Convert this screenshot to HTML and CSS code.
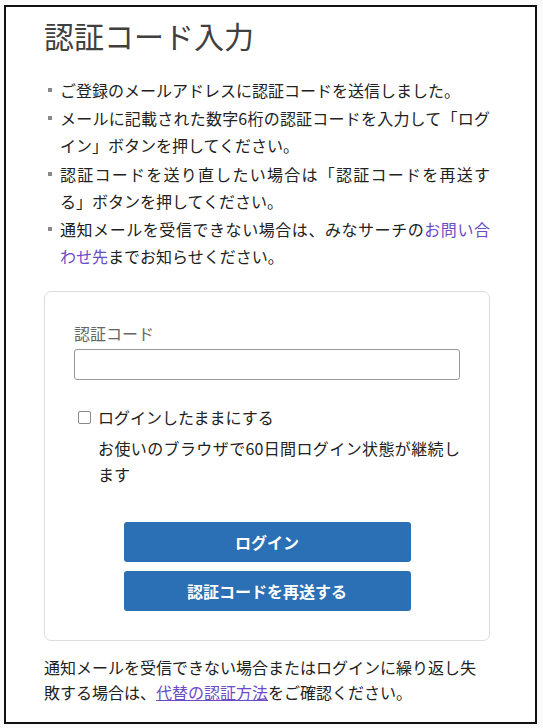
FILE: index.html
```html
<!DOCTYPE html>
<html lang="ja">
<head>
<meta charset="utf-8">
<title>認証コード入力</title>
<link rel="stylesheet" href="styles.css">
</head>
<body>
<div class="frame">
  <h1 class="title">認証コード入力</h1>
  <ul class="notes">
    <li>ご登録のメールアドレスに認証コードを送信しました。</li>
    <li>メールに記載された数字6桁の認証コードを入力して「ログイン」ボタンを押してください。</li>
    <li>認証コードを送り直したい場合は「認証コードを再送する」ボタンを押してください。</li>
    <li>通知メールを受信できない場合は、みなサーチの<a class="link" href="#">お問い合わせ先</a>までお知らせください。</li>
  </ul>
  <form class="card">
    <label class="field-label" for="code">認証コード</label>
    <input class="field-input" id="code" type="text">
    <label class="keep">
      <input class="keep-box" type="checkbox">
      <span>ログインしたままにする</span>
    </label>
    <p class="keep-desc">お使いのブラウザで60日間ログイン状態が継続します</p>
    <div class="actions">
      <button class="btn" type="button">ログイン</button>
      <button class="btn" type="button">認証コードを再送する</button>
    </div>
  </form>
  <p class="footer-note">通知メールを受信できない場合またはログインに繰り返し失敗する場合は、<a class="link underline" href="#">代替の認証方法</a>をご確認ください。</p>
</div>
</body>
</html>
```
FILE: styles.css
```css
* { box-sizing: border-box; }
html, body {
  margin: 0;
  padding: 0;
  background: #fafafa;
}
body {
  font-family: "Noto Sans CJK JP", "Noto Sans", sans-serif;
  color: #222;
  font-size: 16px;
  text-spacing-trim: space-all;
}
.frame {
  margin: 5px 0 0 4px;
  width: 533px;
  height: 719px;
  border: 2px solid #111;
  background: #fff;
  padding: 10px 45px 0 38px;
}
.title {
  margin: 0;
  font-size: 30px;
  line-height: 36px;
  font-weight: 400;
  color: #404040;
}
.notes {
  list-style: none;
  margin: 23.5px 0 20.5px;
  padding: 0 0 0 16px;
}
.notes li {
  position: relative;
  line-height: 27px;
  text-align: justify;
  margin-bottom: 1.5px;
}
.notes li::before {
  content: "";
  position: absolute;
  left: -12px;
  top: 11px;
  width: 4px;
  height: 4px;
  background: #888;
}
.link {
  color: #6a4cc6;
  text-decoration: none;
}
.link.underline {
  text-decoration: underline;
}
.card {
  border: 1px solid #ddd;
  border-radius: 7px;
  padding: 29px 29px;
  display: flex;
  flex-direction: column;
}
.field-label {
  color: #666;
  line-height: 24px;
  margin-bottom: 4px;
}
.field-input {
  height: 31px;
  border: 1px solid #999;
  border-radius: 3px;
  margin: 0;
  padding: 0 6px;
  font-size: 16px;
}
.keep {
  display: flex;
  align-items: center;
  margin-top: 24.5px;
  line-height: 27px;
}
.keep-box {
  appearance: none;
  -webkit-appearance: none;
  margin: 0 7px 0 4px;
  width: 13px;
  height: 13px;
  border: 1px solid #8a8a8a;
  border-radius: 2px;
  background: #fff;
}
.keep-desc {
  margin: 4px 0 0 24px;
  line-height: 26px;
  text-align: justify;
}
.actions {
  margin-top: 34.5px;
  display: flex;
  flex-direction: column;
  align-items: center;
  gap: 9px;
}
.btn {
  width: 287px;
  height: 40px;
  border: 0;
  border-radius: 3px;
  background: #2b70b4;
  color: #fff;
  font-family: "Noto Sans CJK JP", "Noto Sans", sans-serif;
  font-size: 16px;
  font-weight: 700;
  padding: 0;
}
.footer-note {
  margin: 14px 0 0;
  line-height: 25.5px;
}
```
